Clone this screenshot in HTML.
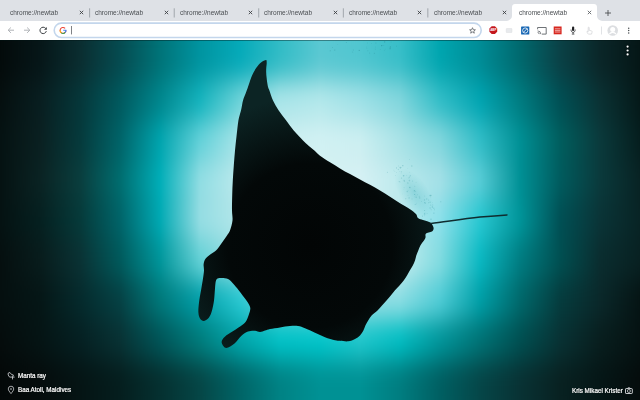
<!DOCTYPE html>
<html><head><meta charset="utf-8">
<style>
*{margin:0;padding:0;box-sizing:border-box}
html,body{width:640px;height:400px;overflow:hidden;background:#000;font-family:"Liberation Sans",sans-serif}
#tabs{position:absolute;left:0;top:0;width:640px;height:20.5px;background:#dee1e6}
.tt{position:absolute;will-change:transform;top:8.5px;font-size:6.5px;line-height:7px;color:#4a4e52;white-space:nowrap}
.ic{position:absolute}
.sep{position:absolute;top:8.3px;width:0.8px;height:9.2px;background:#9aa0a6}
#toolbar{position:absolute;left:0;top:20.5px;width:640px;height:19px;background:#fff}
#tline{position:absolute;left:0;top:39.5px;width:640px;height:1px;background:rgba(0,20,20,0.4)}
#content{position:absolute;left:0;top:39.5px;width:640px;height:360.5px;overflow:hidden}
svg{position:absolute;left:0;top:0}
.attr{position:absolute;will-change:transform;color:#fff;-webkit-text-stroke:0.2px #fff;font-size:6.3px;line-height:7px;white-space:nowrap;text-shadow:0 0 1px rgba(0,0,0,.6)}
</style></head><body>
<div id="content">
<svg width="640" height="360.5" viewBox="0 39.5 640 360.5">
<defs><linearGradient id="r60" gradientUnits="userSpaceOnUse" x1="0" y1="0" x2="640" y2="0"><stop offset="0.0000" stop-color="rgb(3,10,10)"/><stop offset="0.0625" stop-color="rgb(6,22,24)"/><stop offset="0.1250" stop-color="rgb(10,45,48)"/><stop offset="0.1875" stop-color="rgb(5,75,80)"/><stop offset="0.2500" stop-color="rgb(0,115,120)"/><stop offset="0.3125" stop-color="rgb(0,148,160)"/><stop offset="0.3750" stop-color="rgb(5,170,185)"/><stop offset="0.4375" stop-color="rgb(50,188,198)"/><stop offset="0.5000" stop-color="rgb(90,200,210)"/><stop offset="0.5625" stop-color="rgb(80,198,208)"/><stop offset="0.6250" stop-color="rgb(55,190,200)"/><stop offset="0.6875" stop-color="rgb(0,165,175)"/><stop offset="0.7500" stop-color="rgb(0,140,150)"/><stop offset="0.8125" stop-color="rgb(0,105,110)"/><stop offset="0.8750" stop-color="rgb(10,65,70)"/><stop offset="0.9375" stop-color="rgb(10,38,40)"/><stop offset="1.0000" stop-color="rgb(5,22,22)"/></linearGradient><linearGradient id="r100" gradientUnits="userSpaceOnUse" x1="0" y1="0" x2="640" y2="0"><stop offset="0.0000" stop-color="rgb(5,15,15)"/><stop offset="0.0625" stop-color="rgb(8,30,32)"/><stop offset="0.1250" stop-color="rgb(5,55,58)"/><stop offset="0.1875" stop-color="rgb(0,90,95)"/><stop offset="0.2500" stop-color="rgb(0,135,142)"/><stop offset="0.3125" stop-color="rgb(20,180,190)"/><stop offset="0.3750" stop-color="rgb(110,212,218)"/><stop offset="0.4375" stop-color="rgb(170,230,234)"/><stop offset="0.5000" stop-color="rgb(180,233,236)"/><stop offset="0.5625" stop-color="rgb(160,226,232)"/><stop offset="0.6250" stop-color="rgb(130,215,222)"/><stop offset="0.6875" stop-color="rgb(50,190,200)"/><stop offset="0.7500" stop-color="rgb(0,165,178)"/><stop offset="0.8125" stop-color="rgb(0,125,130)"/><stop offset="0.8750" stop-color="rgb(0,80,85)"/><stop offset="0.9375" stop-color="rgb(10,50,52)"/><stop offset="1.0000" stop-color="rgb(5,25,25)"/></linearGradient><linearGradient id="r140" gradientUnits="userSpaceOnUse" x1="0" y1="0" x2="640" y2="0"><stop offset="0.0000" stop-color="rgb(5,18,18)"/><stop offset="0.0625" stop-color="rgb(10,32,33)"/><stop offset="0.1250" stop-color="rgb(5,58,60)"/><stop offset="0.1875" stop-color="rgb(0,100,105)"/><stop offset="0.2500" stop-color="rgb(0,165,175)"/><stop offset="0.3125" stop-color="rgb(100,210,218)"/><stop offset="0.3750" stop-color="rgb(170,230,234)"/><stop offset="0.4375" stop-color="rgb(205,240,242)"/><stop offset="0.5000" stop-color="rgb(210,242,244)"/><stop offset="0.5625" stop-color="rgb(205,240,242)"/><stop offset="0.6250" stop-color="rgb(170,228,232)"/><stop offset="0.6875" stop-color="rgb(130,215,222)"/><stop offset="0.7500" stop-color="rgb(50,190,200)"/><stop offset="0.8125" stop-color="rgb(0,145,150)"/><stop offset="0.8750" stop-color="rgb(0,95,95)"/><stop offset="0.9375" stop-color="rgb(10,58,60)"/><stop offset="1.0000" stop-color="rgb(5,30,30)"/></linearGradient><linearGradient id="r180" gradientUnits="userSpaceOnUse" x1="0" y1="0" x2="640" y2="0"><stop offset="0.0000" stop-color="rgb(5,18,18)"/><stop offset="0.0625" stop-color="rgb(10,35,35)"/><stop offset="0.1250" stop-color="rgb(10,62,62)"/><stop offset="0.1875" stop-color="rgb(0,110,112)"/><stop offset="0.2500" stop-color="rgb(0,175,185)"/><stop offset="0.3125" stop-color="rgb(145,222,228)"/><stop offset="0.3750" stop-color="rgb(190,235,238)"/><stop offset="0.4375" stop-color="rgb(210,242,244)"/><stop offset="0.5000" stop-color="rgb(215,244,245)"/><stop offset="0.5625" stop-color="rgb(215,242,245)"/><stop offset="0.6250" stop-color="rgb(190,235,238)"/><stop offset="0.6875" stop-color="rgb(165,225,232)"/><stop offset="0.7500" stop-color="rgb(90,205,215)"/><stop offset="0.8125" stop-color="rgb(0,145,150)"/><stop offset="0.8750" stop-color="rgb(0,92,95)"/><stop offset="0.9375" stop-color="rgb(10,58,60)"/><stop offset="1.0000" stop-color="rgb(8,35,36)"/></linearGradient><linearGradient id="r220" gradientUnits="userSpaceOnUse" x1="0" y1="0" x2="640" y2="0"><stop offset="0.0000" stop-color="rgb(5,18,18)"/><stop offset="0.0625" stop-color="rgb(5,32,32)"/><stop offset="0.1250" stop-color="rgb(5,58,58)"/><stop offset="0.1875" stop-color="rgb(0,100,105)"/><stop offset="0.2500" stop-color="rgb(0,170,180)"/><stop offset="0.3125" stop-color="rgb(150,222,228)"/><stop offset="0.3750" stop-color="rgb(180,232,235)"/><stop offset="0.4375" stop-color="rgb(210,242,244)"/><stop offset="0.5000" stop-color="rgb(215,244,245)"/><stop offset="0.5625" stop-color="rgb(210,242,244)"/><stop offset="0.6250" stop-color="rgb(190,235,238)"/><stop offset="0.6875" stop-color="rgb(140,225,235)"/><stop offset="0.7500" stop-color="rgb(40,200,210)"/><stop offset="0.8125" stop-color="rgb(0,150,155)"/><stop offset="0.8750" stop-color="rgb(0,80,85)"/><stop offset="0.9375" stop-color="rgb(10,52,55)"/><stop offset="1.0000" stop-color="rgb(8,36,37)"/></linearGradient><linearGradient id="r260" gradientUnits="userSpaceOnUse" x1="0" y1="0" x2="640" y2="0"><stop offset="0.0000" stop-color="rgb(5,15,15)"/><stop offset="0.0625" stop-color="rgb(8,28,28)"/><stop offset="0.1250" stop-color="rgb(10,50,52)"/><stop offset="0.1875" stop-color="rgb(0,90,92)"/><stop offset="0.2500" stop-color="rgb(0,150,155)"/><stop offset="0.3125" stop-color="rgb(100,210,215)"/><stop offset="0.3750" stop-color="rgb(160,225,230)"/><stop offset="0.4375" stop-color="rgb(200,238,240)"/><stop offset="0.5000" stop-color="rgb(200,238,240)"/><stop offset="0.5625" stop-color="rgb(200,238,240)"/><stop offset="0.6250" stop-color="rgb(200,238,240)"/><stop offset="0.6875" stop-color="rgb(130,220,225)"/><stop offset="0.7500" stop-color="rgb(10,185,195)"/><stop offset="0.8125" stop-color="rgb(0,125,130)"/><stop offset="0.8750" stop-color="rgb(0,80,82)"/><stop offset="0.9375" stop-color="rgb(10,45,47)"/><stop offset="1.0000" stop-color="rgb(8,33,34)"/></linearGradient><linearGradient id="r300" gradientUnits="userSpaceOnUse" x1="0" y1="0" x2="640" y2="0"><stop offset="0.0000" stop-color="rgb(5,15,15)"/><stop offset="0.0625" stop-color="rgb(5,22,22)"/><stop offset="0.1250" stop-color="rgb(5,42,44)"/><stop offset="0.1875" stop-color="rgb(5,65,68)"/><stop offset="0.2500" stop-color="rgb(0,120,122)"/><stop offset="0.3125" stop-color="rgb(0,160,170)"/><stop offset="0.3750" stop-color="rgb(40,200,210)"/><stop offset="0.4375" stop-color="rgb(120,215,220)"/><stop offset="0.5000" stop-color="rgb(150,222,228)"/><stop offset="0.5625" stop-color="rgb(150,222,228)"/><stop offset="0.6250" stop-color="rgb(140,222,228)"/><stop offset="0.6875" stop-color="rgb(80,205,215)"/><stop offset="0.7500" stop-color="rgb(0,160,168)"/><stop offset="0.8125" stop-color="rgb(0,105,108)"/><stop offset="0.8750" stop-color="rgb(5,60,62)"/><stop offset="0.9375" stop-color="rgb(10,40,42)"/><stop offset="1.0000" stop-color="rgb(5,20,20)"/></linearGradient><linearGradient id="r340" gradientUnits="userSpaceOnUse" x1="0" y1="0" x2="640" y2="0"><stop offset="0.0000" stop-color="rgb(5,12,12)"/><stop offset="0.0625" stop-color="rgb(5,20,20)"/><stop offset="0.1250" stop-color="rgb(5,32,34)"/><stop offset="0.1875" stop-color="rgb(8,50,52)"/><stop offset="0.2500" stop-color="rgb(0,85,88)"/><stop offset="0.3125" stop-color="rgb(0,125,125)"/><stop offset="0.3750" stop-color="rgb(0,165,170)"/><stop offset="0.4375" stop-color="rgb(0,195,200)"/><stop offset="0.5000" stop-color="rgb(0,198,203)"/><stop offset="0.5625" stop-color="rgb(30,200,205)"/><stop offset="0.6250" stop-color="rgb(0,190,195)"/><stop offset="0.6875" stop-color="rgb(0,150,155)"/><stop offset="0.7500" stop-color="rgb(0,115,118)"/><stop offset="0.8125" stop-color="rgb(0,80,82)"/><stop offset="0.8750" stop-color="rgb(8,50,52)"/><stop offset="0.9375" stop-color="rgb(8,30,30)"/><stop offset="1.0000" stop-color="rgb(5,18,18)"/></linearGradient><linearGradient id="r380" gradientUnits="userSpaceOnUse" x1="0" y1="0" x2="640" y2="0"><stop offset="0.0000" stop-color="rgb(3,8,8)"/><stop offset="0.0625" stop-color="rgb(5,12,12)"/><stop offset="0.1250" stop-color="rgb(5,20,20)"/><stop offset="0.1875" stop-color="rgb(5,30,30)"/><stop offset="0.2500" stop-color="rgb(5,48,48)"/><stop offset="0.3125" stop-color="rgb(5,70,70)"/><stop offset="0.3750" stop-color="rgb(0,100,102)"/><stop offset="0.4375" stop-color="rgb(0,130,132)"/><stop offset="0.5000" stop-color="rgb(0,145,148)"/><stop offset="0.5625" stop-color="rgb(0,145,148)"/><stop offset="0.6250" stop-color="rgb(0,125,128)"/><stop offset="0.6875" stop-color="rgb(0,95,98)"/><stop offset="0.7500" stop-color="rgb(5,70,72)"/><stop offset="0.8125" stop-color="rgb(8,50,52)"/><stop offset="0.8750" stop-color="rgb(8,33,33)"/><stop offset="0.9375" stop-color="rgb(5,22,22)"/><stop offset="1.0000" stop-color="rgb(5,12,12)"/></linearGradient><filter id="vb" color-interpolation-filters="sRGB" filterUnits="userSpaceOnUse" x="0" y="-40" width="640" height="540"><feGaussianBlur color-interpolation-filters="sRGB" stdDeviation="0 13"/></filter></defs>
<g filter="url(#vb)"><rect x="0" y="0" width="640" height="80.0" fill="url(#r60)"/><rect x="0" y="80.0" width="640" height="40.0" fill="url(#r100)"/><rect x="0" y="120.0" width="640" height="40.0" fill="url(#r140)"/><rect x="0" y="160.0" width="640" height="40.0" fill="url(#r180)"/><rect x="0" y="200.0" width="640" height="40.0" fill="url(#r220)"/><rect x="0" y="240.0" width="640" height="40.0" fill="url(#r260)"/><rect x="0" y="280.0" width="640" height="40.0" fill="url(#r300)"/><rect x="0" y="320.0" width="640" height="40.0" fill="url(#r340)"/><rect x="0" y="360.0" width="640" height="100.0" fill="url(#r380)"/></g>
<defs><radialGradient id="bub"><stop offset="0" stop-color="rgba(0,150,165,0.2)"/><stop offset="1" stop-color="rgba(0,150,165,0)"/></radialGradient></defs><ellipse cx="414" cy="192" rx="14" ry="28" transform="rotate(-35 414 192)" fill="url(#bub)"/><circle cx="401.5" cy="177.6" r="0.60" fill="rgba(0,120,130,0.20)"/><circle cx="409.7" cy="171.8" r="0.43" fill="rgba(0,120,130,0.13)"/><circle cx="422.5" cy="215.6" r="0.54" fill="rgba(0,120,130,0.20)"/><circle cx="396.5" cy="167.4" r="0.56" fill="rgba(0,120,130,0.22)"/><circle cx="428.6" cy="202.2" r="0.60" fill="rgba(0,120,130,0.14)"/><circle cx="402.8" cy="165.2" r="0.66" fill="rgba(0,120,130,0.25)"/><circle cx="426.7" cy="198.5" r="0.70" fill="rgba(0,120,130,0.17)"/><circle cx="431.4" cy="209.5" r="0.37" fill="rgba(0,120,130,0.13)"/><circle cx="424.4" cy="215.2" r="0.45" fill="rgba(0,120,130,0.18)"/><circle cx="407.2" cy="191.1" r="0.59" fill="rgba(0,120,130,0.25)"/><circle cx="430.1" cy="195.1" r="0.80" fill="rgba(0,120,130,0.21)"/><circle cx="411.8" cy="165.6" r="0.75" fill="rgba(0,120,130,0.19)"/><circle cx="424.6" cy="210.0" r="0.59" fill="rgba(0,120,130,0.14)"/><circle cx="409.4" cy="158.9" r="0.34" fill="rgba(0,120,130,0.23)"/><circle cx="414.4" cy="190.3" r="0.68" fill="rgba(0,120,130,0.25)"/><circle cx="398.4" cy="169.0" r="0.66" fill="rgba(0,120,130,0.15)"/><circle cx="433.8" cy="207.8" r="0.80" fill="rgba(0,120,130,0.14)"/><circle cx="399.6" cy="170.8" r="0.40" fill="rgba(0,120,130,0.16)"/><circle cx="419.6" cy="197.3" r="0.73" fill="rgba(0,120,130,0.14)"/><circle cx="434.5" cy="209.2" r="0.53" fill="rgba(0,120,130,0.19)"/><circle cx="414.6" cy="194.0" r="0.61" fill="rgba(0,120,130,0.26)"/><circle cx="408.0" cy="194.7" r="0.42" fill="rgba(0,120,130,0.14)"/><circle cx="425.0" cy="212.1" r="0.31" fill="rgba(0,120,130,0.16)"/><circle cx="424.6" cy="195.5" r="0.62" fill="rgba(0,120,130,0.10)"/><circle cx="412.0" cy="198.4" r="0.48" fill="rgba(0,120,130,0.22)"/><circle cx="424.8" cy="202.2" r="0.64" fill="rgba(0,120,130,0.26)"/><circle cx="400.1" cy="181.4" r="0.46" fill="rgba(0,120,130,0.16)"/><circle cx="404.1" cy="187.3" r="0.45" fill="rgba(0,120,130,0.16)"/><circle cx="430.7" cy="204.6" r="0.67" fill="rgba(0,120,130,0.14)"/><circle cx="406.8" cy="174.8" r="0.39" fill="rgba(0,120,130,0.17)"/><circle cx="425.3" cy="202.7" r="0.47" fill="rgba(0,120,130,0.24)"/><circle cx="414.8" cy="185.8" r="0.47" fill="rgba(0,120,130,0.21)"/><circle cx="424.7" cy="209.8" r="0.36" fill="rgba(0,120,130,0.19)"/><circle cx="407.8" cy="167.8" r="0.39" fill="rgba(0,120,130,0.14)"/><circle cx="419.8" cy="198.1" r="0.47" fill="rgba(0,120,130,0.11)"/><circle cx="409.0" cy="177.6" r="0.47" fill="rgba(0,120,130,0.17)"/><circle cx="402.8" cy="193.4" r="0.38" fill="rgba(0,120,130,0.09)"/><circle cx="440.8" cy="201.3" r="0.52" fill="rgba(0,120,130,0.26)"/><circle cx="431.0" cy="218.8" r="0.72" fill="rgba(0,120,130,0.21)"/><circle cx="414.5" cy="196.3" r="0.41" fill="rgba(0,120,130,0.10)"/><circle cx="415.9" cy="203.9" r="0.32" fill="rgba(0,120,130,0.25)"/><circle cx="431.0" cy="195.0" r="0.75" fill="rgba(0,120,130,0.19)"/><circle cx="398.4" cy="165.5" r="0.45" fill="rgba(0,120,130,0.21)"/><circle cx="405.7" cy="198.2" r="0.61" fill="rgba(0,120,130,0.15)"/><circle cx="410.3" cy="175.3" r="0.69" fill="rgba(0,120,130,0.16)"/><circle cx="395.7" cy="175.1" r="0.39" fill="rgba(0,120,130,0.23)"/><circle cx="432.6" cy="201.7" r="0.30" fill="rgba(0,120,130,0.20)"/><circle cx="431.1" cy="208.9" r="0.43" fill="rgba(0,120,130,0.19)"/><circle cx="403.9" cy="188.9" r="0.30" fill="rgba(0,120,130,0.10)"/><circle cx="403.6" cy="175.2" r="0.79" fill="rgba(0,120,130,0.25)"/><circle cx="396.6" cy="171.9" r="0.46" fill="rgba(0,120,130,0.16)"/><circle cx="415.9" cy="195.3" r="0.40" fill="rgba(0,120,130,0.15)"/><circle cx="394.8" cy="171.0" r="0.49" fill="rgba(0,120,130,0.10)"/><circle cx="399.3" cy="181.1" r="0.69" fill="rgba(0,120,130,0.16)"/><circle cx="421.4" cy="201.1" r="0.49" fill="rgba(0,120,130,0.18)"/><circle cx="415.1" cy="204.0" r="0.53" fill="rgba(0,120,130,0.13)"/><circle cx="415.6" cy="190.8" r="0.51" fill="rgba(0,120,130,0.17)"/><circle cx="432.4" cy="206.6" r="0.75" fill="rgba(0,120,130,0.23)"/><circle cx="404.4" cy="180.6" r="0.71" fill="rgba(0,120,130,0.21)"/><circle cx="430.1" cy="201.7" r="0.67" fill="rgba(0,120,130,0.19)"/><circle cx="401.1" cy="172.5" r="0.37" fill="rgba(0,120,130,0.23)"/><circle cx="401.4" cy="171.3" r="0.74" fill="rgba(0,120,130,0.12)"/><circle cx="400.2" cy="166.9" r="0.72" fill="rgba(0,120,130,0.21)"/><circle cx="432.7" cy="204.5" r="0.70" fill="rgba(0,120,130,0.10)"/><circle cx="416.2" cy="202.7" r="0.35" fill="rgba(0,120,130,0.22)"/><circle cx="433.9" cy="212.6" r="0.58" fill="rgba(0,120,130,0.24)"/><circle cx="407.9" cy="182.6" r="0.61" fill="rgba(0,120,130,0.23)"/><circle cx="408.0" cy="189.8" r="0.48" fill="rgba(0,120,130,0.17)"/><circle cx="387.4" cy="171.8" r="0.51" fill="rgba(0,120,130,0.22)"/><circle cx="400.4" cy="167.6" r="0.64" fill="rgba(0,120,130,0.19)"/><circle cx="407.8" cy="181.9" r="0.37" fill="rgba(0,120,130,0.11)"/><circle cx="428.7" cy="199.4" r="0.52" fill="rgba(0,120,130,0.22)"/><circle cx="404.0" cy="179.9" r="0.59" fill="rgba(0,120,130,0.14)"/><circle cx="401.4" cy="167.1" r="0.45" fill="rgba(0,120,130,0.22)"/><circle cx="416.1" cy="181.7" r="0.43" fill="rgba(0,120,130,0.13)"/><circle cx="393.9" cy="169.7" r="0.39" fill="rgba(0,120,130,0.16)"/><circle cx="409.4" cy="180.1" r="0.80" fill="rgba(0,120,130,0.17)"/><circle cx="409.1" cy="197.4" r="0.71" fill="rgba(0,120,130,0.19)"/><circle cx="412.6" cy="180.5" r="0.50" fill="rgba(0,120,130,0.22)"/><circle cx="427.1" cy="212.9" r="0.42" fill="rgba(0,120,130,0.22)"/><circle cx="430.4" cy="196.6" r="0.42" fill="rgba(0,120,130,0.13)"/><circle cx="409.8" cy="187.1" r="0.73" fill="rgba(0,120,130,0.25)"/><circle cx="409.5" cy="176.5" r="0.51" fill="rgba(0,120,130,0.22)"/><circle cx="408.8" cy="177.2" r="0.45" fill="rgba(0,120,130,0.16)"/><circle cx="417.5" cy="194.2" r="0.47" fill="rgba(0,120,130,0.17)"/><circle cx="416.2" cy="196.8" r="0.78" fill="rgba(0,120,130,0.16)"/><circle cx="419.4" cy="195.8" r="0.63" fill="rgba(0,120,130,0.11)"/><circle cx="430.1" cy="207.6" r="0.77" fill="rgba(0,120,130,0.16)"/><circle cx="424.5" cy="199.4" r="0.64" fill="rgba(0,120,130,0.21)"/><circle cx="424.6" cy="213.4" r="0.78" fill="rgba(0,120,130,0.21)"/><circle cx="367.5" cy="42.4" r="0.45" fill="rgba(0,80,90,0.19)"/><circle cx="380.3" cy="49.1" r="0.47" fill="rgba(0,80,90,0.15)"/><circle cx="375.2" cy="48.6" r="0.35" fill="rgba(0,80,90,0.28)"/><circle cx="375.9" cy="42.5" r="0.58" fill="rgba(0,80,90,0.14)"/><circle cx="353.2" cy="49.6" r="0.48" fill="rgba(0,80,90,0.22)"/><circle cx="375.3" cy="46.5" r="0.39" fill="rgba(0,80,90,0.15)"/><circle cx="334.8" cy="49.6" r="0.53" fill="rgba(0,80,90,0.22)"/><circle cx="381.8" cy="45.3" r="0.38" fill="rgba(0,80,90,0.19)"/><circle cx="391.1" cy="41.5" r="0.45" fill="rgba(0,80,90,0.16)"/><circle cx="383.8" cy="45.2" r="0.40" fill="rgba(0,80,90,0.19)"/><circle cx="367.9" cy="50.3" r="0.41" fill="rgba(0,80,90,0.27)"/><circle cx="337.8" cy="44.2" r="0.33" fill="rgba(0,80,90,0.14)"/><circle cx="384.5" cy="49.7" r="0.36" fill="rgba(0,80,90,0.16)"/><circle cx="359.2" cy="49.9" r="0.54" fill="rgba(0,80,90,0.25)"/><circle cx="371.4" cy="42.8" r="0.42" fill="rgba(0,80,90,0.16)"/><circle cx="366.9" cy="47.8" r="0.36" fill="rgba(0,80,90,0.17)"/><circle cx="384.7" cy="41.4" r="0.54" fill="rgba(0,80,90,0.28)"/><circle cx="396.5" cy="45.6" r="0.47" fill="rgba(0,80,90,0.22)"/><circle cx="374.4" cy="52.7" r="0.51" fill="rgba(0,80,90,0.17)"/><circle cx="390.2" cy="46.8" r="0.48" fill="rgba(0,80,90,0.25)"/><circle cx="330.2" cy="50.2" r="0.50" fill="rgba(0,80,90,0.21)"/><circle cx="366.7" cy="46.5" r="0.36" fill="rgba(0,80,90,0.22)"/><circle cx="332.6" cy="47.0" r="0.49" fill="rgba(0,80,90,0.20)"/><circle cx="369.6" cy="52.5" r="0.57" fill="rgba(0,80,90,0.14)"/><circle cx="385.5" cy="48.5" r="0.32" fill="rgba(0,80,90,0.19)"/><circle cx="346.3" cy="41.9" r="0.46" fill="rgba(0,80,90,0.29)"/><circle cx="352.6" cy="51.4" r="0.51" fill="rgba(0,80,90,0.14)"/><circle cx="390.1" cy="48.2" r="0.58" fill="rgba(0,80,90,0.25)"/><circle cx="381.8" cy="45.1" r="0.54" fill="rgba(0,80,90,0.29)"/><circle cx="390.3" cy="46.2" r="0.53" fill="rgba(0,80,90,0.21)"/>
<radialGradient id="bodyg" gradientUnits="userSpaceOnUse" cx="310" cy="245" r="150"><stop offset="0" stop-color="rgb(2,5,5)"/><stop offset="0.55" stop-color="rgb(3,8,8)"/><stop offset="1" stop-color="rgb(12,36,36)"/></radialGradient><path d="M266,59.5 C266.9,59.5 266.6,60.8 266.7,62 C266.8,63.2 266.4,65.3 266.3,67 C266.2,68.7 266.1,70.3 266.2,72 C266.2,73.7 266.4,75.3 266.6,77 C266.8,78.7 266.9,80.3 267.2,82 C267.5,83.7 267.8,85.7 268.2,87 C268.6,88.3 268.6,87.8 269.4,90 C270.2,92.2 271.4,96.7 273,100 C274.6,103.3 276.5,106.7 278.7,110 C280.9,113.3 283.7,116.7 286.2,120 C288.7,123.3 290.9,126.7 293.7,130 C296.5,133.3 300.6,137.5 303,140 C305.4,142.5 306.4,143.3 308.3,145 C310.2,146.7 312.4,148.3 314.4,150 C316.3,151.7 317.4,153.2 320,155.2 C322.6,157.2 326.7,159.7 330,161.8 C333.3,163.9 336.7,165.9 340,167.9 C343.3,169.9 346.7,171.8 350,173.6 C353.3,175.4 356.7,177.1 360,178.9 C363.3,180.7 366.7,182.5 370,184.3 C373.3,186.1 376.7,187.9 380,189.9 C383.3,191.9 386.7,194.0 390,196.2 C393.3,198.3 396.7,200.7 400,202.8 C403.3,204.9 407.3,207.0 410,208.8 C412.7,210.6 414.7,212.1 416,213.5 C417.3,214.9 416.8,216.5 418,217.5 C419.2,218.5 421.3,218.9 423,219.5 C424.7,220.1 426.6,220.4 428,221 C429.4,221.6 430.6,222.0 431.5,223 C432.4,224.0 433.2,225.8 433.5,227 C433.8,228.2 433.5,229.2 433,230 C432.5,230.8 431.5,231.1 430.5,231.5 C429.5,231.9 427.8,232.1 427,232.5 C426.2,232.9 425.8,233.2 425.5,234 C425.2,234.8 425.8,236.0 425.5,237 C425.2,238.0 424.9,238.7 424,240 C423.1,241.3 421.3,243.3 420.4,245 C419.4,246.7 419.0,248.3 418.3,250 C417.6,251.7 416.9,253.3 416.3,255 C415.8,256.7 415.6,258.3 415,260 C414.4,261.7 413.7,263.3 412.8,265 C411.9,266.7 410.8,268.3 409.8,270 C408.8,271.7 408.0,273.3 407,275 C406.0,276.7 404.9,278.3 403.7,280 C402.4,281.7 401.0,283.3 399.5,285 C398.0,286.7 396.2,288.3 394.8,290 C393.4,291.7 392.2,293.3 390.8,295 C389.4,296.7 388.0,298.3 386.5,300 C385.0,301.7 383.5,303.3 382,305 C380.5,306.7 379.2,308.3 377.5,310 C375.8,311.7 373.2,313.3 371.6,315 C370.1,316.7 369.2,318.3 368.2,320 C367.2,321.7 366.2,323.3 365.4,325 C364.6,326.7 364.3,328.3 363.4,330 C362.5,331.7 361.4,333.6 360,335 C358.6,336.4 356.9,337.5 355,338.5 C353.1,339.5 350.8,340.5 348.3,340.8 C345.8,341.1 342.2,340.5 340,340.3 C337.8,340.1 337.5,340.3 335,339.7 C332.5,339.1 328.3,337.9 325,336.7 C321.7,335.5 318.3,333.8 315,332.3 C311.7,330.8 307.8,328.9 305,327.8 C302.2,326.7 300.5,326.0 298,325.6 C295.5,325.2 293.0,325.4 290,325.6 C287.0,325.8 283.3,326.5 280,327 C276.7,327.5 272.5,328.0 270,328.5 C267.5,329.0 266.7,329.5 265,330 C263.3,330.5 261.7,331.5 260,331.5 C258.3,331.5 257.0,330.3 255,330.2 C253.0,330.1 250.3,330.1 248,331 C245.7,331.9 243.4,333.5 241.2,335.5 C238.9,337.5 237.0,341.0 234.5,343 C232.0,345.0 228.3,347.6 226.2,347.5 C224.1,347.4 222.1,343.9 221.7,342.2 C221.3,340.4 222.6,338.6 224,337 C225.4,335.4 227.2,334.4 230,332.5 C232.8,330.6 237.9,327.6 240.5,325.7 C243.1,323.8 244.3,323.1 245.7,321.2 C247.1,319.3 247.9,316.8 248.7,314.5 C249.5,312.2 250.5,309.7 250.3,307.5 C250.1,305.3 248.7,303.5 247.5,301.5 C246.3,299.5 244.5,297.5 243,295.5 C241.5,293.5 240.2,291.6 238.5,289.5 C236.8,287.4 234.8,284.8 233,283 C231.2,281.2 229.8,279.5 228,278.6 C226.2,277.7 223.6,277.7 222,277.6 C220.4,277.5 219.4,277.4 218.4,277.8 C217.4,278.2 216.6,278.3 216,280 C215.4,281.7 215.3,284.7 215,288 C214.7,291.3 214.5,296.3 214,300 C213.5,303.7 212.8,307.2 212,310 C211.2,312.8 210.3,315.3 209,317 C207.7,318.7 205.5,320.2 204,320.4 C202.5,320.6 200.9,319.4 200,318 C199.1,316.6 198.6,314.7 198.4,312 C198.2,309.3 198.6,305.7 199,302 C199.4,298.3 200.3,294.0 201,290 C201.7,286.0 202.5,281.3 203,278 C203.5,274.7 203.9,272.3 204,270 C204.1,267.7 203.4,265.8 203.6,264 C203.8,262.2 204.1,260.5 205,259 C205.9,257.5 207.2,256.5 209,255 C210.8,253.5 214.2,251.7 216,250 C217.8,248.3 218.8,246.7 220,245 C221.2,243.3 222.3,241.7 223.5,240 C224.7,238.3 225.9,236.7 227,235 C228.1,233.3 229.1,232.5 230,230 C230.9,227.5 232.2,223.3 232.5,220 C232.8,216.7 232.1,214.2 232,210 C231.9,205.8 232.1,200.0 232.2,195 C232.3,190.0 232.5,185.0 232.8,180 C233.1,175.0 233.4,170.0 233.8,165 C234.2,160.0 234.5,155.0 235,150 C235.5,145.0 236.0,140.0 236.6,135 C237.2,130.0 237.7,124.2 238.4,120 C239.1,115.8 240.2,113.3 241,110 C241.8,106.7 242.2,103.0 243,100 C243.8,97.0 245.2,94.2 246,92 C246.8,89.8 247.2,88.7 247.8,87 C248.4,85.3 248.9,83.7 249.5,82 C250.1,80.3 250.5,78.7 251.2,77 C251.9,75.3 252.6,73.7 253.5,72 C254.4,70.3 255.2,68.7 256.5,67 C257.8,65.3 259.4,63.2 261,62 C262.6,60.8 265.1,59.5 266,59.5Z" fill="url(#bodyg)"/>
<path d="M431,223 C445,221.3 462,218.6 480,216.6 C492,215.4 500,214.8 507,214.4" stroke="rgb(15,45,48)" stroke-width="1.5" fill="none" stroke-linecap="round"/>
</svg>
</div>
<div id="tabs">
<svg class="ic" style="left:0;top:0" width="640" height="20" viewBox="0 0 640 20"><rect x="89.20" y="8.3" width="0.9" height="9.2" fill="#9aa0a6"/><rect x="173.75" y="8.3" width="0.9" height="9.2" fill="#9aa0a6"/><rect x="258.30" y="8.3" width="0.9" height="9.2" fill="#9aa0a6"/><rect x="342.85" y="8.3" width="0.9" height="9.2" fill="#9aa0a6"/><rect x="427.40" y="8.3" width="0.9" height="9.2" fill="#9aa0a6"/></svg>
<svg style="position:absolute;left:505px;top:0" width="100" height="21" viewBox="505 0 100 21"><path d="M505,21 C509,21 512,19 512,16 L512,7 C512,5.2 513.3,4 515,4 L594,4 C595.7,4 597,5.2 597,7 L597,16 C597,19 600,21 604,21 Z" fill="#fff"/></svg>
<div class="tt" style="left:10.00px">chrome://newtab</div>
<svg class="ic" style="left:79.00px;top:10px" width="5" height="5" viewBox="0 0 5 5"><path d="M0.8,0.8L4.2,4.2M4.2,0.8L0.8,4.2" stroke="#3c4043" stroke-width="0.9"/></svg>
<div class="tt" style="left:94.75px">chrome://newtab</div>
<svg class="ic" style="left:163.60px;top:10px" width="5" height="5" viewBox="0 0 5 5"><path d="M0.8,0.8L4.2,4.2M4.2,0.8L0.8,4.2" stroke="#3c4043" stroke-width="0.9"/></svg>
<div class="tt" style="left:179.50px">chrome://newtab</div>
<svg class="ic" style="left:248.20px;top:10px" width="5" height="5" viewBox="0 0 5 5"><path d="M0.8,0.8L4.2,4.2M4.2,0.8L0.8,4.2" stroke="#3c4043" stroke-width="0.9"/></svg>
<div class="tt" style="left:264.25px">chrome://newtab</div>
<svg class="ic" style="left:332.80px;top:10px" width="5" height="5" viewBox="0 0 5 5"><path d="M0.8,0.8L4.2,4.2M4.2,0.8L0.8,4.2" stroke="#3c4043" stroke-width="0.9"/></svg>
<div class="tt" style="left:349.00px">chrome://newtab</div>
<svg class="ic" style="left:417.40px;top:10px" width="5" height="5" viewBox="0 0 5 5"><path d="M0.8,0.8L4.2,4.2M4.2,0.8L0.8,4.2" stroke="#3c4043" stroke-width="0.9"/></svg>
<div class="tt" style="left:433.75px">chrome://newtab</div>
<svg class="ic" style="left:502.00px;top:10px" width="5" height="5" viewBox="0 0 5 5"><path d="M0.8,0.8L4.2,4.2M4.2,0.8L0.8,4.2" stroke="#3c4043" stroke-width="0.9"/></svg>
<div class="tt" style="left:518.50px">chrome://newtab</div>
<svg class="ic" style="left:587.00px;top:10px" width="5" height="5" viewBox="0 0 5 5"><path d="M0.8,0.8L4.2,4.2M4.2,0.8L0.8,4.2" stroke="#5f6368" stroke-width="0.9"/></svg>
<svg class="ic" style="left:605px;top:9.5px" width="6" height="6" viewBox="0 0 6 6"><path d="M0,3H6M3,0V6" stroke="#3c4043" stroke-width="0.8"/></svg>
</div>
<div id="toolbar">
<svg class="ic" style="left:0;top:0" width="640" height="19" viewBox="0 20.5 640 19">
<path d="M14,29.7H8.2M10.9,27L8.2,29.7L10.9,32.4" stroke="#a8acb0" stroke-width="0.9" fill="none"/>
<path d="M24,29.7H29.8M27.1,27L29.8,29.7L27.1,32.4" stroke="#a8acb0" stroke-width="0.9" fill="none"/>
<path d="M45.6,27.8 A3.2,3.2 0 1 0 46.3,30.6" stroke="#3c4043" stroke-width="1" fill="none"/>
<path d="M46.8,26.4V29.2H44Z" fill="#3c4043"/>
<rect x="54.2" y="22.6" width="427" height="14.4" rx="7.2" fill="#fff" stroke="#c3d6ec" stroke-width="1.6"/>
<g transform="translate(63,30)">
<path d="M2.9,-0.3 A2.9,2.9 0 1 1 2.1,-2.1" stroke="#ea4335" stroke-width="1.1" fill="none"/>
<path d="M-2.9,0 A2.9,2.9 0 0 0 -1.7,2.35" stroke="#fbbc05" stroke-width="1.1" fill="none"/>
<path d="M-1.7,2.35 A2.9,2.9 0 0 0 2.2,1.9" stroke="#34a853" stroke-width="1.1" fill="none"/>
<path d="M2.2,1.9 A2.9,2.9 0 0 0 2.9,-0.3 H0.2" stroke="#4285f4" stroke-width="1.1" fill="none"/>
</g>
<rect x="71" y="25.5" width="0.8" height="8.4" fill="#5f6368"/>
<path d="M472.5,27.2 L473.3,29.2 L475.4,29.3 L473.8,30.6 L474.3,32.7 L472.5,31.5 L470.7,32.7 L471.2,30.6 L469.6,29.3 L471.7,29.2Z" stroke="#5f6368" stroke-width="0.8" fill="none" stroke-linejoin="round"/>
<path d="M491.7,25.7 H494.9 L497.2,28 V31.2 L494.9,33.5 H491.7 L489.4,31.2 V28Z" fill="#c4161c"/>
<text x="493.3" y="30.8" font-size="3" font-weight="bold" fill="#fff" text-anchor="middle" font-family="Liberation Sans">ABP</text>
<rect x="506.2" y="28" width="5.8" height="4" rx="0.5" fill="#e8eaed" stroke="#d6d8db" stroke-width="0.4"/>
<rect x="521.1" y="25.9" width="8.2" height="8.2" rx="0.6" fill="#1565b3"/>
<circle cx="525.2" cy="30" r="2.6" stroke="#fff" stroke-width="0.8" fill="none"/>
<path d="M523.2,32 L527.2,28" stroke="#fff" stroke-width="0.8"/>
<path d="M537.6,28.8 V27 H546.2 V33.6 H541.8" stroke="#5f6368" stroke-width="0.9" fill="none"/>
<path d="M537.6,30.4 A3.2,3.2 0 0 1 540.8,33.6 M537.6,32 A1.6,1.6 0 0 1 539.2,33.6" stroke="#5f6368" stroke-width="0.8" fill="none"/>
<rect x="553.7" y="26" width="7.9" height="7.8" fill="#d7261e"/>
<path d="M554.9,28.3H560.4M554.9,29.9H560.4M554.9,31.5H560.4" stroke="#f4c6c4" stroke-width="0.8"/>
<rect x="572" y="26" width="2.2" height="4.6" rx="1.1" fill="#202124"/><path d="M571,29 C571,31 572,31.9 573.1,31.9 C574.2,31.9 575.2,31 575.2,29 M573.1,31.9 V33.4 M571.8,33.6 H574.4" stroke="#202124" stroke-width="0.7" fill="none"/>
<path d="M588.4,33.6 C587.2,32.6 586.8,31.4 587.3,30.6 L588.2,31.2 V27.2 C588.2,26.5 589.2,26.5 589.2,27.2 V29.8 L591.6,30.4 C592.2,30.6 592.2,31.4 592,32 L591.5,33.6Z" stroke="#c8cacc" stroke-width="0.6" fill="none"/>
<rect x="601" y="26" width="0.8" height="8" fill="#dadce0"/>
<circle cx="612.7" cy="30" r="5.3" fill="#dcdee1"/>
<circle cx="612.7" cy="29" r="2.5" fill="#fff"/>
<path d="M609.3,33.8 C610.2,32.2 611.5,31.8 612.7,31.8 C613.9,31.8 615.2,32.2 616.1,33.8" stroke="#fff" stroke-width="1.2" fill="none"/>
<circle cx="628.7" cy="27.7" r="0.75" fill="#4a4e52"/><circle cx="628.7" cy="30.1" r="0.75" fill="#4a4e52"/><circle cx="628.7" cy="32.5" r="0.75" fill="#4a4e52"/>
</svg>
</div>
<div id="tline"></div>
<div class="attr" style="left:17.7px;top:371.5px">Manta ray</div>
<div class="attr" style="left:17.7px;top:386.3px">Baa Atoll, Maldives</div>
<div class="attr" style="left:572px;top:386.5px">Kris Mikael Krister</div>
<svg class="ic" style="left:0;top:360px" width="640" height="40" viewBox="0 360 640 40">
<path d="M8.2,373.2 L9.9,372.5 L11.6,374.5 L13.4,375 L12.5,377.1 L9.6,377.1 L8.2,375Z M12.5,377.1 H14.6 M12.5,377.1 V379.4" stroke="#e8eaed" stroke-width="0.75" fill="none" stroke-linejoin="round"/>
<path d="M11,393.6 C9.5,391.6 8.3,390.3 8.3,388.9 A2.7,2.7 0 0 1 13.7,388.9 C13.7,390.3 12.5,391.6 11,393.6Z" stroke="#e8eaed" stroke-width="0.7" fill="none"/>
<circle cx="11" cy="388.9" r="0.75" fill="#e8eaed"/>
<rect x="625.5" y="388.6" width="6.8" height="4.9" rx="0.6" stroke="#e8eaed" stroke-width="0.85" fill="none"/>
<path d="M627.4,388.6 L628,387.7 H629.8 L630.4,388.6" stroke="#e8eaed" stroke-width="0.6" fill="none"/>
<circle cx="628.9" cy="391" r="1.5" stroke="#e8eaed" stroke-width="0.7" fill="none"/>
</svg>
<svg class="ic" style="left:620px;top:40px" width="16" height="20" viewBox="620 40 16 20">
<g fill="#fff" style="filter:drop-shadow(0 0 1px rgba(0,0,0,.9))"><circle cx="627.6" cy="46.6" r="1.1"/><circle cx="627.6" cy="50.5" r="1.1"/><circle cx="627.6" cy="54.4" r="1.1"/></g>
</svg>
</body></html>
